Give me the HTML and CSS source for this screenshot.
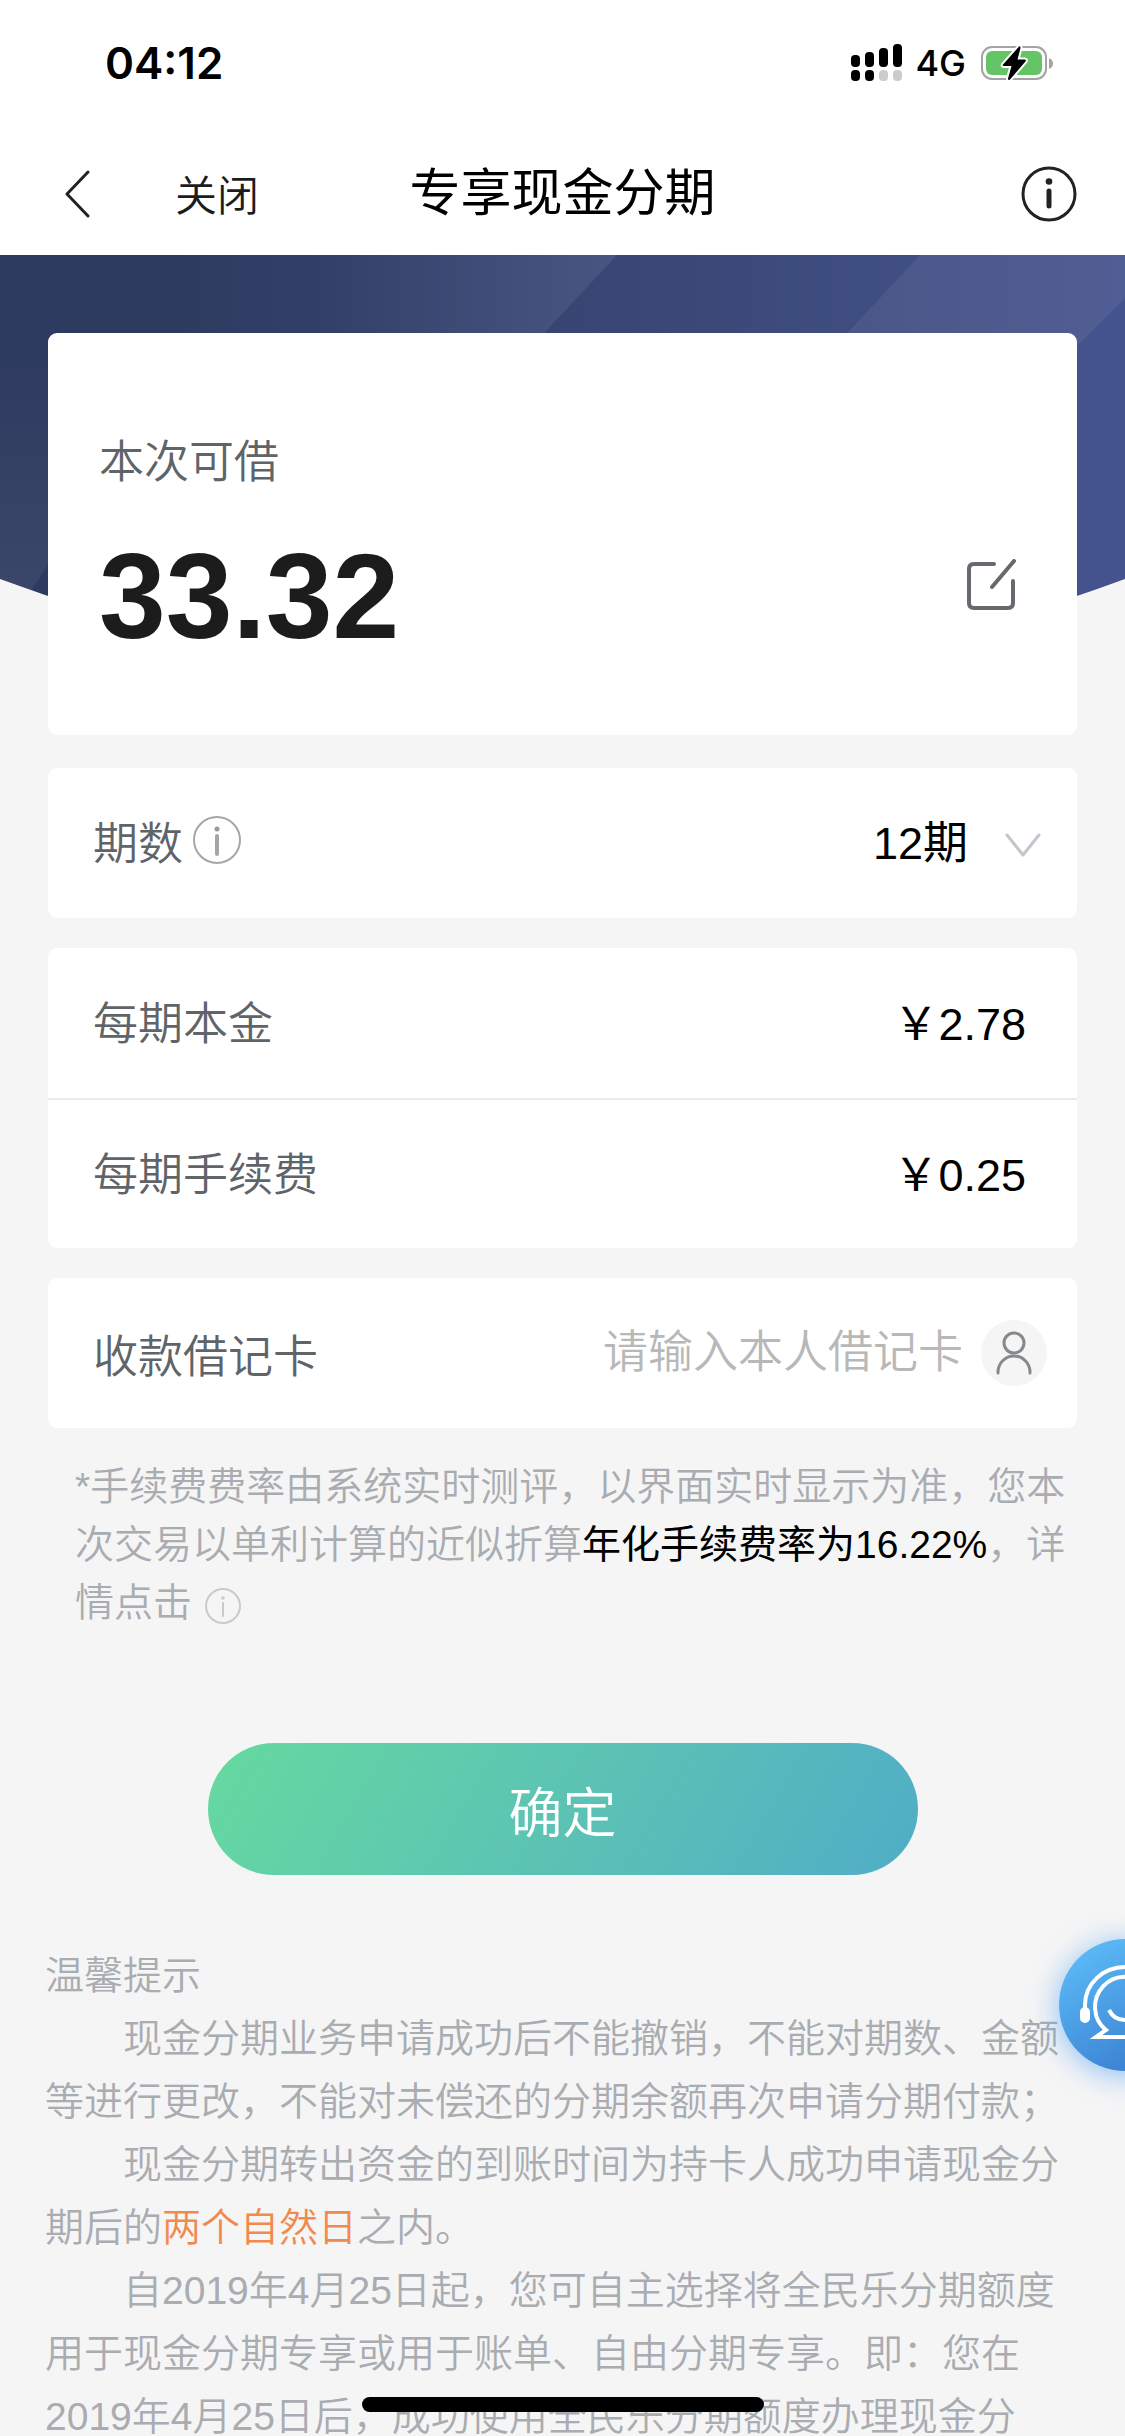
FILE: index.html
```html
<!DOCTYPE html>
<html lang="zh-CN">
<head>
<meta charset="utf-8">
<meta name="viewport" content="width=device-width, initial-scale=1">
<title>专享现金分期</title>
<link rel="stylesheet" href="styles.css">
</head>
<body>
<div class="app">
  <div class="status-bar">
    <span class="status-time">04:12</span>
    <div class="status-right">
      <svg class="signal" viewBox="0 0 52 38" aria-hidden="true">
        <rect x="0" y="11" width="9" height="12" rx="4"/>
        <rect x="14" y="8" width="9" height="15" rx="4"/>
        <rect x="28" y="4" width="9" height="19" rx="4"/>
        <rect x="42" y="0" width="9" height="23" rx="4"/>
        <rect x="0" y="26" width="9" height="11" rx="4"/>
        <rect x="14" y="26" width="9" height="11" rx="4"/>
        <rect x="28" y="26" width="9" height="11" rx="4" fill="#ccc"/>
        <rect x="42" y="26" width="9" height="11" rx="4" fill="#ccc"/>
      </svg>
      <span class="network">4G</span>
      <svg class="battery" viewBox="0 0 72 38" aria-hidden="true">
        <rect x="1" y="3" width="64" height="32" rx="10" fill="none" stroke="#a3a3a3" stroke-width="2"/>
        <rect x="5" y="7" width="56" height="24" rx="6" fill="#65c466"/>
        <path d="M68 14Q72 15.500 72 19.500T68 25Z" fill="#a3a3a3"/>
        <path d="M38 2.500L22 20.500Q21 22 23 22H30.500L27 34.500Q27 37 29 35.500L44.500 17.500Q45.500 15.500 43.500 15.500H36.500L39.500 4Q39.500 1.500 38 2.500Z" fill="#000" stroke="#fff" stroke-width="4" paint-order="stroke"/>
      </svg>
    </div>
  </div>

  <header class="nav">
    <div class="nav-left">
      <button class="icon-button" type="button" aria-label="返回">
        <svg class="icon-back" viewBox="0 0 28 48"><path d="M25 2L4 24L25 46"/></svg>
      </button>
      <button class="close" type="button">关闭</button>
    </div>
    <h1 class="nav-title">专享现金分期</h1>
    <button class="icon-button nav-info" type="button" aria-label="说明">
      <svg class="icon-info-lg" viewBox="0 0 56 56">
        <circle cx="28" cy="28" r="26" fill="none" stroke-width="3"/>
        <circle class="dot" cx="28" cy="15.500" r="3.300"/>
        <path d="M28 25V40" stroke-width="5"/>
      </svg>
    </button>
  </header>

  <main class="content">
    <svg class="hero" viewBox="0 0 1125 380" preserveAspectRatio="none" aria-hidden="true">
      <defs>
        <linearGradient id="base" x1="0" y1="0" x2="1" y2="0">
          <stop offset="0" stop-color="#2e3b60"/>
          <stop offset=".15" stop-color="#2e3b60"/>
          <stop offset=".4" stop-color="#35436f"/>
          <stop offset=".6" stop-color="#3a4877"/>
          <stop offset="1" stop-color="#45548f"/>
        </linearGradient>
        <linearGradient id="band" x1="0" y1="0" x2="1" y2="0">
          <stop offset="0" stop-color="#fff" stop-opacity="0"/>
          <stop offset=".5" stop-color="#fff" stop-opacity="0"/>
          <stop offset="1" stop-color="#fff" stop-opacity=".08"/>
        </linearGradient>
        <linearGradient id="side" x1="0" y1="0" x2="0" y2="1">
          <stop offset="0" stop-color="#fff" stop-opacity="0"/>
          <stop offset="1" stop-color="#fff" stop-opacity=".07"/>
        </linearGradient>
        <clipPath id="arc"><path d="M0 0H1125V324Q562 532 0 324Z"/></clipPath>
      </defs>
      <g clip-path="url(#arc)">
        <rect width="1125" height="380" fill="url(#base)"/>
        <path d="M0 0H617L262 380H0Z" fill="url(#band)"/>
        <path d="M0 100H48V310L28 340L0 380Z" fill="url(#side)"/>
        <path d="M920 0H1125V43L790 380H565Z" fill="#fff" fill-opacity=".06"/>
      </g>
    </svg>

    <form class="form">
      <section class="card amount-card">
        <div>
          <p class="amount-label">本次可借</p>
          <p class="amount">33.32</p>
        </div>
        <button class="icon-button edit" type="button" aria-label="修改金额">
          <svg class="icon-edit" viewBox="0 0 50 52">
            <path d="M27 5H7Q2 5 2 10V44Q2 49 7 49H41Q46 49 46 44V22M25 28L47 2"/>
          </svg>
        </button>
      </section>

      <section class="card row">
        <label class="label" for="term">期数</label>
        <button class="icon-button" type="button" aria-label="期数说明">
          <svg class="icon-info-md" viewBox="0 0 50 50">
            <circle cx="25" cy="25" r="23" fill="none" stroke-width="2"/>
            <circle class="dot" cx="25" cy="14" r="2.500"/>
            <path d="M25 21V39" stroke-width="4"/>
          </svg>
        </button>
        <div class="term-field">
          <select class="term" id="term">
            <option>12期</option>
            <option>24期</option>
          </select>
          <svg class="icon-down" viewBox="0 0 36 26" aria-hidden="true"><path d="M2 2L18 22L34 2"/></svg>
        </div>
      </section>

      <dl class="card fees">
        <div class="row">
          <dt class="label">每期本金</dt>
          <dd class="value">￥2.78</dd>
        </div>
        <div class="row">
          <dt class="label">每期手续费</dt>
          <dd class="value">￥0.25</dd>
        </div>
      </dl>

      <section class="card row debit-row">
        <label class="label" for="debit">收款借记卡</label>
        <div class="debit-field">
          <input class="debit" id="debit" type="text" placeholder="请输入本人借记卡">
          <button class="contact" type="button" aria-label="选择借记卡">
            <svg class="icon-person" viewBox="0 0 36 44">
              <circle cx="18" cy="12" r="10"/>
              <path d="M2 42V41A16 16 0 0 1 34 41V42"/>
            </svg>
          </button>
        </div>
      </section>

      <p class="note">*手续费费率由系统实时测评，以界面实时显示为准，您本次交易以单利计算的近似折算<strong class="rate">年化手续费率为16.22%</strong>，详情点击<button class="icon-button note-info" type="button" aria-label="费率详情">
        <svg class="icon-info-sm" viewBox="0 0 38 38">
          <circle cx="19" cy="19" r="17" fill="none" stroke-width="2"/>
          <circle class="dot" cx="19" cy="11" r="1.800"/>
          <path d="M19 16V29" stroke-width="2"/>
        </svg>
      </button></p>

      <button class="submit" type="submit">确定</button>
    </form>

    <section class="tips">
      <h2 class="tips-title">温馨提示</h2>
      <p>现金分期业务申请成功后不能撤销，不能对期数、金额等进行更改，不能对未偿还的分期余额再次申请分期付款；</p>
      <p>现金分期转出资金的到账时间为持卡人成功申请现金分期后的<em class="highlight">两个自然日</em>之内。</p>
      <p>自2019年4月25日起，您可自主选择将全民乐分期额度用于现金分期专享或用于账单、自由分期专享。即：您在2019年4月25日后，成功使用全民乐分期额度办理现金分</p>
    </section>
  </main>

  <button class="service" type="button" aria-label="在线客服">
    <svg class="icon-service" viewBox="0 0 132 132">
      <path d="M26 72V66A40 38 0 0 1 106 66V72" stroke-width="4"/>
      <path d="M66 98H37L47 91A30 30 0 1 1 85 91L95 98Z" stroke-width="4"/>
      <path d="M50 71Q55 81 66 81T82 71" stroke-width="4"/>
      <rect x="21" y="68" width="10" height="16" rx="5"/>
      <rect x="101" y="68" width="10" height="16" rx="5"/>
    </svg>
  </button>
  <div class="home-indicator"></div>
</div>
</body>
</html>
```
FILE: styles.css
```css
* {
  box-sizing: border-box;
}

body,
h1,
h2,
p,
dl,
dd {
  margin: 0;
}

body {
  background: #f5f5f5;
  color: #000;
  font-family: "Liberation Sans", "Noto Sans CJK SC", sans-serif;
  font-size: 45px;
  font-weight: 350;
  text-autospace: no-autospace;
  text-spacing-trim: space-all;
}

button,
input,
select {
  padding: 0;
  border: 0;
  background: none;
  color: inherit;
  font: inherit;
}

svg {
  display: block;
}

.app {
  display: flex;
  flex-direction: column;
  height: 100vh;
  overflow: hidden;
}

/* Status bar */

.status-bar {
  display: flex;
  flex: none;
  align-items: center;
  justify-content: space-between;
  height: 132px;
  padding: 0 72px 6px 105px;
  background: #fff;
  font-family: Inter, sans-serif;
}

.status-time {
  font-size: 44px;
  font-weight: 600;
}

.status-right {
  display: flex;
  align-items: center;
}

.signal {
  width: 52px;
  height: 38px;
}

.network {
  margin: 0 15px 0 12px;
  font-size: 36px;
  font-weight: 500;
  line-height: 42px;
}

.battery {
  width: 72px;
  height: 38px;
}

/* Navigation bar */

.nav {
  display: grid;
  flex: none;
  grid-template-columns: 1fr auto 1fr;
  align-items: center;
  height: 123px;
  padding: 0 48px 0 63px;
  background: #fff;
}

.nav-left {
  display: flex;
  align-items: center;
  gap: 84px;
}

.close {
  padding-bottom: 3px;
  color: #1c1c1c;
  font-size: 42px;
}

.nav-title {
  padding: 0 15px 9px 0;
  font-size: 51px;
  font-weight: 400;
}

.nav-info {
  justify-self: end;
}

.icon-button svg,
.icon-person,
.icon-down {
  fill: none;
  stroke-linecap: round;
  stroke-linejoin: round;
}

.icon-button .dot {
  stroke: none;
}

.icon-back {
  width: 28px;
  height: 48px;
  stroke: #222;
  stroke-width: 3;
}

.icon-info-lg {
  width: 56px;
  height: 56px;
  stroke: #222;
}

.icon-info-lg .dot {
  fill: #222;
}

/* Content */

.content {
  position: relative;
  flex: 1;
  min-height: 0;
  overflow-y: auto;
  scrollbar-width: none;
}

.hero {
  position: absolute;
  top: 0;
  left: 0;
  width: 100%;
  height: 380px;
}

.form {
  position: relative;
  display: flex;
  flex-direction: column;
  gap: 30px;
  padding: 78px 48px 0;
}

.card {
  border-radius: 9px;
  background: #fff;
}

.amount-card {
  display: flex;
  align-items: center;
  justify-content: space-between;
  margin-bottom: 3px;
  padding: 97px 60px 71px 51px;
}

.amount-label {
  color: #5f6468;
  line-height: 66px;
}

.amount {
  margin-top: 33px;
  color: #1c1c1c;
  font-size: 120px;
  font-weight: 700;
  line-height: 135px;
}

.edit {
  margin-top: 75px;
}

.icon-edit {
  width: 50px;
  height: 52px;
  stroke: #666a6f;
  stroke-width: 4;
}

.row {
  display: flex;
  align-items: center;
  height: 150px;
  padding: 0 30px 6px 45px;
}

.debit-row {
  padding-bottom: 0;
}

.label {
  color: #5f6468;
}

.icon-info-md {
  width: 50px;
  height: 50px;
  margin-left: 9px;
  stroke: #a6a6a6;
}

.icon-info-md .dot {
  fill: #999;
}

.term-field,
.debit-field {
  display: flex;
  align-items: center;
  margin-left: auto;
}

.term-field {
  gap: 36px;
  padding: 6px 6px 0 0;
}

.term {
  appearance: none;
  font-weight: 400;
}

.icon-down {
  width: 36px;
  height: 26px;
  margin-top: 6px;
  stroke: #c3c7cd;
  stroke-width: 3;
}

.fees .row {
  padding-right: 51px;
}

.fees .row + .row {
  border-top: 2px solid #ebebeb;
}

.value {
  margin-left: auto;
  font-weight: 400;
}

.debit-field {
  flex: 1;
  gap: 18px;
}

.debit {
  flex: 1;
  min-width: 0;
  text-align: right;
}

.debit::placeholder {
  color: #b8b8b8;
}

.contact {
  display: grid;
  place-items: center;
  width: 66px;
  height: 66px;
  border-radius: 50%;
  background: #f5f5f5;
}

.icon-person {
  width: 36px;
  height: 44px;
  stroke: #85898d;
  stroke-width: 3;
}

.note {
  padding-left: 27px;
  color: #a9acb1;
  font-size: 39px;
  line-height: 58px;
}

.rate {
  color: #000;
  font-weight: 400;
}

.note-info {
  margin-left: 12px;
  vertical-align: middle;
}

.icon-info-sm {
  width: 38px;
  height: 38px;
  stroke: #c8cad0;
}

.icon-info-sm .dot {
  fill: #c8cad0;
}

.submit {
  align-self: center;
  width: 69%;
  height: 132px;
  margin-top: 81px;
  border-radius: 66px;
  background: linear-gradient(120deg, #66d9a0, #5bc1b5 55%, #50adc6);
  color: #fff;
  font-size: 54px;
}

.tips {
  position: relative;
  padding: 69px 45px 0;
  color: #a9acb1;
  font-size: 39px;
  line-height: 63px;
}

.tips-title {
  font-size: 39px;
  font-weight: 350;
}

.tips p {
  text-indent: 2em;
}

.highlight {
  color: #f08a4f;
  font-style: normal;
}

/* Overlays */

.service {
  position: fixed;
  top: 1939px;
  right: -66px;
  width: 132px;
  height: 132px;
  border-radius: 50%;
  background: linear-gradient(150deg, #60c2fb, #3a80d2 85%);
  box-shadow: 0 4px 30px rgb(90 165 245 / 70%);
}

.icon-service {
  width: 132px;
  height: 132px;
  fill: none;
  stroke: #fff;
}

.icon-service rect {
  fill: #fff;
  stroke: none;
}

.home-indicator {
  position: fixed;
  bottom: 24px;
  left: 50%;
  width: 402px;
  height: 15px;
  margin-left: -201px;
  border-radius: 8px;
  background: #000;
}
```
